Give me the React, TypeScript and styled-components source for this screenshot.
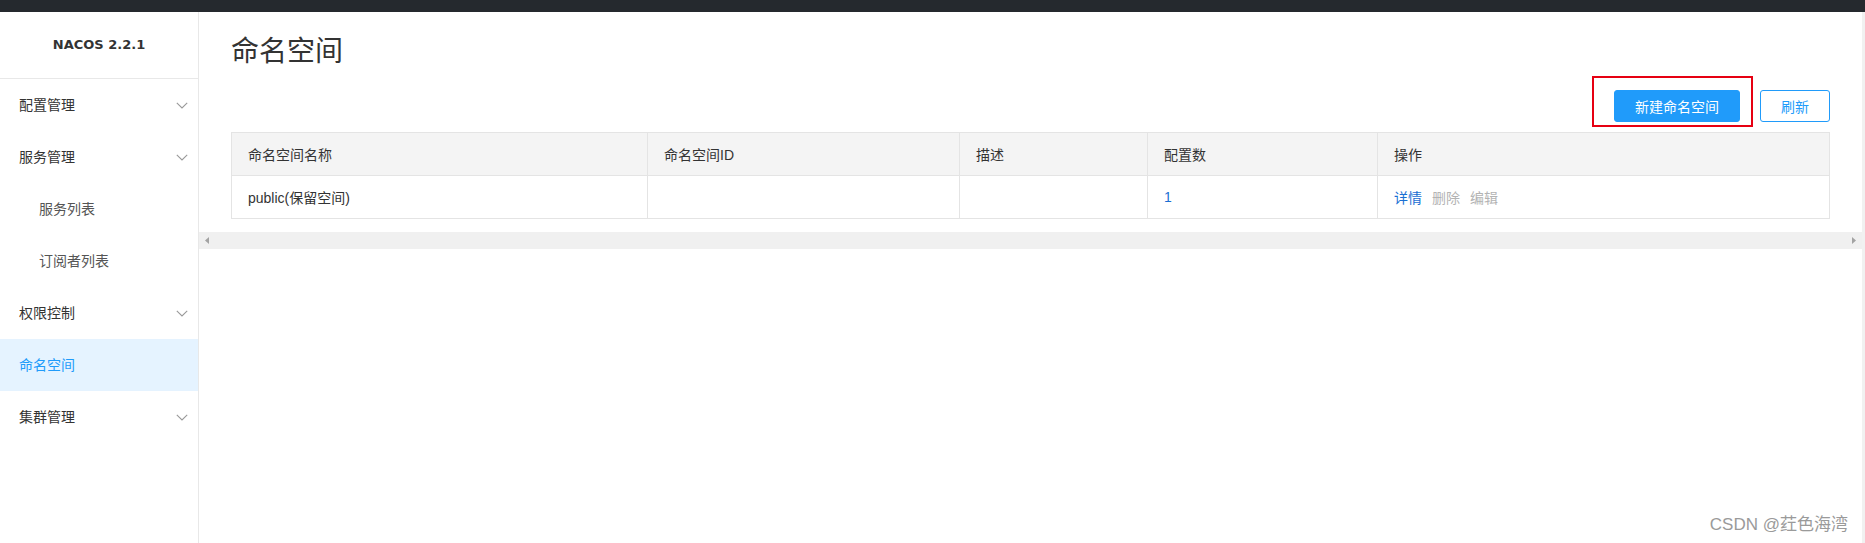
import React from "react";
import styled, { createGlobalStyle } from "styled-components";

const GlobalStyle = createGlobalStyle`
  html, body { margin: 0; padding: 0; height: 100%; background: #fff; }
  body { font-family: "Liberation Sans", "Noto Sans CJK SC", sans-serif; color: #333; overflow: hidden; }
  #root { height: 100%; }
  * { box-sizing: border-box; }
`;

const Page = styled.div`
  position: relative;
  height: 100vh;
  display: flex;
  flex-direction: column;
`;

const TopBar = styled.div`
  height: 12px;
  background: #25292e;
  flex: none;
`;

const Body = styled.div`
  flex: 1;
  display: flex;
  min-height: 0;
`;

const Sidebar = styled.aside`
  width: 199px;
  flex: none;
  border-right: 1px solid #e8e8e8;
  display: flex;
  flex-direction: column;
`;

const Logo = styled.div`
  height: 67px;
  border-bottom: 1px solid #e8e8e8;
  display: flex;
  align-items: center;
  justify-content: center;
  font-family: "DejaVu Sans", sans-serif;
  font-weight: bold;
  font-size: 13px;
  color: #333;
  padding-bottom: 1px;
`;

const MenuItem = styled.div<{ $sub?: boolean; $active?: boolean }>`
  height: 52px;
  display: flex;
  align-items: center;
  justify-content: space-between;
  padding-left: ${(p) => (p.$sub ? "39px" : "19px")};
  padding-right: 10px;
  padding-bottom: 3px;
  font-size: 14px;
  font-family: "Noto Sans CJK SC", sans-serif;
  color: ${(p) => (p.$active ? "#209bfa" : p.$sub ? "#555" : "#333")};
  background: ${(p) => (p.$active ? "#e5f3ff" : "transparent")};
`;

const ChevronBox = styled.span`
  display: flex;
  padding-top: 3px;
`;

const Chevron = () => (
  <ChevronBox>
    <svg width="12" height="7" viewBox="0 0 12 7" fill="none">
      <path d="M0.8 0.8 L6 6 L11.2 0.8" stroke="#999" strokeWidth="1.1" />
    </svg>
  </ChevronBox>
);

const Main = styled.main`
  flex: 1;
  display: flex;
  flex-direction: column;
  border-right: 3px solid #f1f1f1;
  min-width: 0;
`;

const Content = styled.div`
  padding: 0 32px 0 32px;
`;

const Title = styled.h1`
  margin: 17px 0 0 0;
  font-size: 28px;
  line-height: 40px;
  font-weight: normal;
  font-family: "Noto Sans CJK SC", sans-serif;
  color: #333;
`;

const Toolbar = styled.div`
  margin-top: 21px;
  display: flex;
  justify-content: flex-end;
  gap: 20px;
  height: 32px;
`;

const Annotated = styled.div`
  position: relative;
  &::after {
    content: "";
    position: absolute;
    top: -14px;
    left: -22px;
    right: -13px;
    bottom: -5px;
    border: 2px solid #e60012;
    pointer-events: none;
  }
`;

const Button = styled.button<{ $primary?: boolean }>`
  height: 32px;
  width: ${(p) => (p.$primary ? "126px" : "70px")};
  border-radius: 3px;
  font-size: 14px;
  font-family: "Noto Sans CJK SC", sans-serif;
  border: 1px solid #209bfa;
  background: ${(p) => (p.$primary ? "#209bfa" : "#fff")};
  color: ${(p) => (p.$primary ? "#fff" : "#209bfa")};
  padding: 0;
  cursor: pointer;
`;

const Table = styled.div`
  margin-top: 10px;
  display: grid;
  grid-template-columns: 416px 312px 188px 230px 1fr;
  border-top: 1px solid #e4e4e4;
  border-left: 1px solid #e4e4e4;
`;

const Cell = styled.div<{ $head?: boolean }>`
  height: 43px;
  display: flex;
  align-items: center;
  padding: 0 16px 1px 16px;
  font-size: 14px;
  font-family: "Liberation Sans", "Noto Sans CJK SC", sans-serif;
  background: ${(p) => (p.$head ? "#f4f4f4" : "#fff")};
  border-right: 1px solid #e4e4e4;
  border-bottom: 1px solid #e4e4e4;
  color: #333;
  gap: 10px;
`;

const Link = styled.span<{ $disabled?: boolean }>`
  color: ${(p) => (p.$disabled ? "#b3b3b3" : "#1a6fd3")};
`;

const Count = styled.span`
  color: #1a6fd3;
`;

const Scrollbar = styled.div`
  margin-top: 13px;
  height: 17px;
  background: #f0f0f0;
  display: flex;
  align-items: center;
  justify-content: space-between;
  padding: 0 6px;
`;

const Arrow = ({ dir }: { dir: "left" | "right" }) => (
  <svg width="4" height="7" viewBox="0 0 4 7">
    <path d={dir === "left" ? "M4 0 L0 3.5 L4 7 Z" : "M0 0 L4 3.5 L0 7 Z"} fill="#a3a3a3" />
  </svg>
);

const Watermark = styled.div`
  position: absolute;
  right: 17px;
  bottom: 8px;
  font-size: 17px;
  font-family: "Liberation Sans", "Noto Sans CJK SC", sans-serif;
  color: #9a9a9a;
  text-shadow: 0 0 1px #fff;
`;

const menu: { label: string; sub?: boolean; active?: boolean; arrow?: boolean }[] = [
  { label: "配置管理", arrow: true },
  { label: "服务管理", arrow: true },
  { label: "服务列表", sub: true },
  { label: "订阅者列表", sub: true },
  { label: "权限控制", arrow: true },
  { label: "命名空间", active: true },
  { label: "集群管理", arrow: true },
];

export default function App() {
  return (
    <Page>
      <GlobalStyle />
      <TopBar />
      <Body>
        <Sidebar>
          <Logo>NACOS 2.2.1</Logo>
          {menu.map((m) => (
            <MenuItem key={m.label} $sub={m.sub} $active={m.active}>
              <span>{m.label}</span>
              {m.arrow && <Chevron />}
            </MenuItem>
          ))}
        </Sidebar>
        <Main>
          <Content>
            <Title>命名空间</Title>
            <Toolbar>
              <Annotated>
                <Button $primary>新建命名空间</Button>
              </Annotated>
              <Button>刷新</Button>
            </Toolbar>
            <Table>
              <Cell $head>命名空间名称</Cell>
              <Cell $head>命名空间ID</Cell>
              <Cell $head>描述</Cell>
              <Cell $head>配置数</Cell>
              <Cell $head>操作</Cell>
              <Cell>public(保留空间)</Cell>
              <Cell />
              <Cell />
              <Cell>
                <Count>1</Count>
              </Cell>
              <Cell>
                <Link>详情</Link>
                <Link $disabled>删除</Link>
                <Link $disabled>编辑</Link>
              </Cell>
            </Table>
          </Content>
          <Scrollbar>
            <Arrow dir="left" />
            <Arrow dir="right" />
          </Scrollbar>
        </Main>
      </Body>
      <Watermark>CSDN @荭色海湾</Watermark>
    </Page>
  );
}
